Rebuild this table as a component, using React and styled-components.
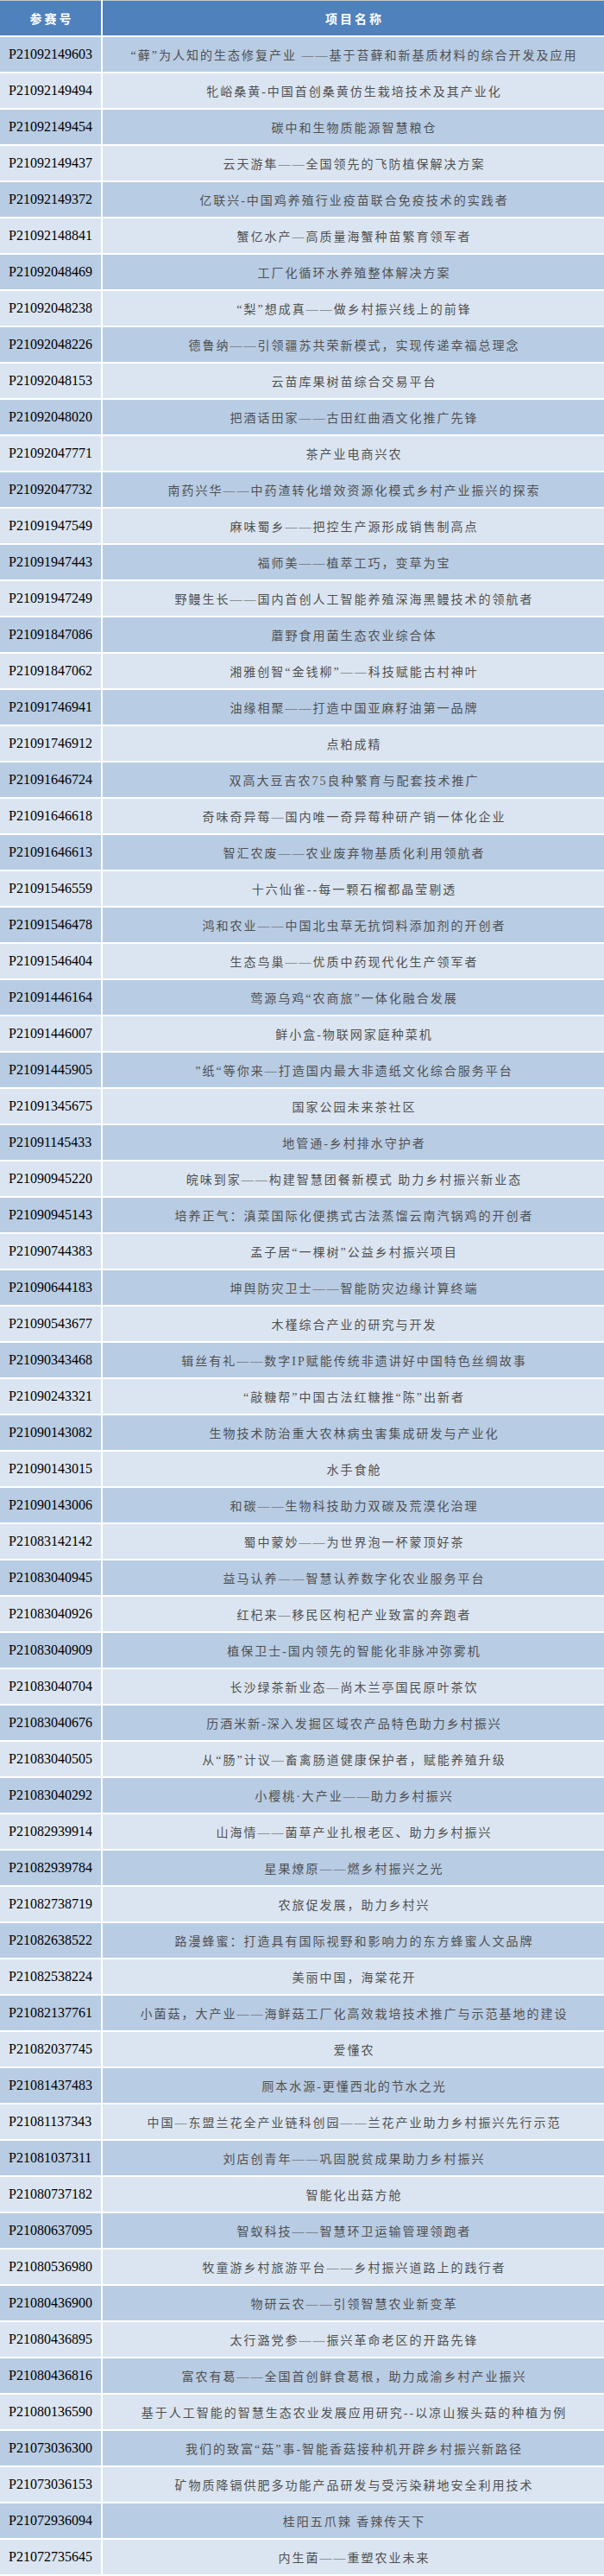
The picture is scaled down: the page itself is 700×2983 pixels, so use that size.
import React from 'react'
import styled, { createGlobalStyle } from 'styled-components'

const GlobalStyle = createGlobalStyle`
  html, body {
    margin: 0;
    padding: 0;
    background: #fff;
  }
`

const Table = styled.table`
  width: 700px;
  border-collapse: collapse;
  table-layout: fixed;
  border-top: 1px solid #c4c8cc;
`

const HeadCell = styled.th`
  height: 40px;
  padding: 0 0 0 ${props => props.spacing}px;
  background-color: #4f81bd;
  color: #fff;
  font-family: "Liberation Serif", "Noto Sans CJK SC", serif;
  font-size: 14px;
  font-weight: 700;
  letter-spacing: ${props => props.spacing}px;
  text-align: center;
  vertical-align: middle;
  border-left: ${props => props.divider ? '2px solid #fff' : 'none'};
`

const Row = styled.tr`
  background-color: ${props => props.odd ? '#b8cce4' : '#dbe5f1'};
  border-top: 2px solid #fff;
`

const IdCell = styled.td`
  height: 40px;
  padding: 0 0 0 10px;
  font-family: "Liberation Serif", serif;
  font-size: 16px;
  color: #000;
  vertical-align: middle;
  white-space: nowrap;
`

const NameCell = styled.td`
  height: 40px;
  padding: 0 0 0 2px;
  border-left: 2px solid #fff;
  font-family: "Liberation Serif", "Noto Sans CJK SC", serif;
  font-size: 14px;
  letter-spacing: 2px;
  color: #505050;
  text-align: center;
  vertical-align: middle;
  white-space: nowrap;
`

const rows = [
  ['P21092149603', '“藓”为人知的生态修复产业 ——基于苔藓和新基质材料的综合开发及应用'],
  ['P21092149494', '牝峪桑黄-中国首创桑黄仿生栽培技术及其产业化'],
  ['P21092149454', '碳中和生物质能源智慧粮仓'],
  ['P21092149437', '云天游隼——全国领先的飞防植保解决方案'],
  ['P21092149372', '亿联兴-中国鸡养殖行业疫苗联合免疫技术的实践者'],
  ['P21092148841', '蟹亿水产—高质量海蟹种苗繁育领军者'],
  ['P21092048469', '工厂化循环水养殖整体解决方案'],
  ['P21092048238', '“梨”想成真——做乡村振兴线上的前锋'],
  ['P21092048226', '德鲁纳——引领疆苏共荣新模式，实现传递幸福总理念'],
  ['P21092048153', '云苗库果树苗综合交易平台'],
  ['P21092048020', '把酒话田家——古田红曲酒文化推广先锋'],
  ['P21092047771', '茶产业电商兴农'],
  ['P21092047732', '南药兴华——中药渣转化增效资源化模式乡村产业振兴的探索'],
  ['P21091947549', '麻味蜀乡——把控生产源形成销售制高点'],
  ['P21091947443', '福师美——植萃工巧，变草为宝'],
  ['P21091947249', '野鳗生长——国内首创人工智能养殖深海黑鳗技术的领航者'],
  ['P21091847086', '蘑野食用菌生态农业综合体'],
  ['P21091847062', '湘雅创智“金钱柳”——科技赋能古村神叶'],
  ['P21091746941', '油缘相聚——打造中国亚麻籽油第一品牌'],
  ['P21091746912', '点粕成精'],
  ['P21091646724', '双高大豆吉农75良种繁育与配套技术推广'],
  ['P21091646618', '奇味奇异莓—国内唯一奇异莓种研产销一体化企业'],
  ['P21091646613', '智汇农废——农业废弃物基质化利用领航者'],
  ['P21091546559', '十六仙雀--每一颗石榴都晶莹剔透'],
  ['P21091546478', '鸿和农业——中国北虫草无抗饲料添加剂的开创者'],
  ['P21091546404', '生态鸟巢——优质中药现代化生产领军者'],
  ['P21091446164', '莺源乌鸡“农商旅”一体化融合发展'],
  ['P21091446007', '鲜小盒-物联网家庭种菜机'],
  ['P21091445905', '”纸“等你来—打造国内最大非遗纸文化综合服务平台'],
  ['P21091345675', '国家公园未来茶社区'],
  ['P21091145433', '地管通-乡村排水守护者'],
  ['P21090945220', '皖味到家——构建智慧团餐新模式 助力乡村振兴新业态'],
  ['P21090945143', '培养正气：滇菜国际化便携式古法蒸馏云南汽锅鸡的开创者'],
  ['P21090744383', '孟子居“一棵树”公益乡村振兴项目'],
  ['P21090644183', '坤舆防灾卫士——智能防灾边缘计算终端'],
  ['P21090543677', '木槿综合产业的研究与开发'],
  ['P21090343468', '辑丝有礼——数字IP赋能传统非遗讲好中国特色丝绸故事'],
  ['P21090243321', '“敲糖帮”中国古法红糖推“陈”出新者'],
  ['P21090143082', '生物技术防治重大农林病虫害集成研发与产业化'],
  ['P21090143015', '水手食舱'],
  ['P21090143006', '和碳——生物科技助力双碳及荒漠化治理'],
  ['P21083142142', '蜀中蒙妙——为世界泡一杯蒙顶好茶'],
  ['P21083040945', '益马认养——智慧认养数字化农业服务平台'],
  ['P21083040926', '红杞来—移民区枸杞产业致富的奔跑者'],
  ['P21083040909', '植保卫士-国内领先的智能化非脉冲弥雾机'],
  ['P21083040704', '长沙绿茶新业态—尚木兰亭国民原叶茶饮'],
  ['P21083040676', '历酒米新-深入发掘区域农产品特色助力乡村振兴'],
  ['P21083040505', '从“肠”计议—畜禽肠道健康保护者，赋能养殖升级'],
  ['P21083040292', '小樱桃·大产业——助力乡村振兴'],
  ['P21082939914', '山海情——菌草产业扎根老区、助力乡村振兴'],
  ['P21082939784', '星果燎原——燃乡村振兴之光'],
  ['P21082738719', '农旅促发展，助力乡村兴'],
  ['P21082638522', '路漫蜂蜜：打造具有国际视野和影响力的东方蜂蜜人文品牌'],
  ['P21082538224', '美丽中国，海棠花开'],
  ['P21082137761', '小菌菇，大产业——海鲜菇工厂化高效栽培技术推广与示范基地的建设'],
  ['P21082037745', '爱懂农'],
  ['P21081437483', '厕本水源-更懂西北的节水之光'],
  ['P21081137343', '中国—东盟兰花全产业链科创园——兰花产业助力乡村振兴先行示范'],
  ['P21081037311', '刘店创青年——巩固脱贫成果助力乡村振兴'],
  ['P21080737182', '智能化出菇方舱'],
  ['P21080637095', '智蚁科技——智慧环卫运输管理领跑者'],
  ['P21080536980', '牧童游乡村旅游平台——乡村振兴道路上的践行者'],
  ['P21080436900', '物研云农——引领智慧农业新变革'],
  ['P21080436895', '太行潞党参——振兴革命老区的开路先锋'],
  ['P21080436816', '富农有葛——全国首创鲜食葛根，助力成渝乡村产业振兴'],
  ['P21080136590', '基于人工智能的智慧生态农业发展应用研究--以凉山猴头菇的种植为例'],
  ['P21073036300', '我们的致富“菇”事-智能香菇接种机开辟乡村振兴新路径'],
  ['P21073036153', '矿物质降镉供肥多功能产品研发与受污染耕地安全利用技术'],
  ['P21072936094', '桂阳五爪辣 香辣传天下'],
  ['P21072735645', '内生菌——重塑农业未来'],
]

const App = () => {
  return (
    <>
      <GlobalStyle />
      <Table>
        <colgroup>
          <col style={{ width: 118 }} />
          <col />
        </colgroup>
        <thead>
          <tr>
            <HeadCell spacing={3}>参赛号</HeadCell>
            <HeadCell spacing={3} divider>项目名称</HeadCell>
          </tr>
        </thead>
        <tbody>
          {rows.map(([id, name], i) => (
            <Row key={id} odd={i % 2 === 0}>
              <IdCell>{id}</IdCell>
              <NameCell>{name}</NameCell>
            </Row>
          ))}
        </tbody>
      </Table>
    </>
  )
}

export default App
